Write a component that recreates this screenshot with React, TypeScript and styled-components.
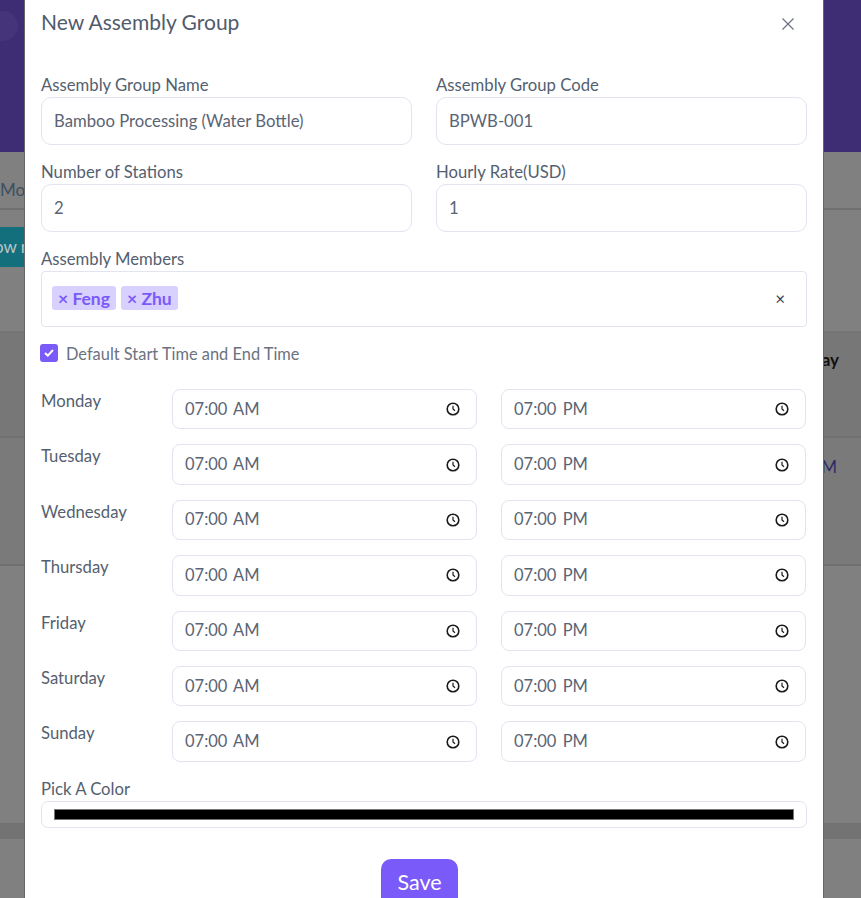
import React from 'react';
import styled, { createGlobalStyle } from 'styled-components';

const GlobalStyle = createGlobalStyle`
  html, body {
    margin: 0;
    padding: 0;
    height: 100%;
    overflow: hidden;
  }
  body {
    font-family: "Lato", "Noto Sans", sans-serif;
    background: #808080;
  }
  * {
    box-sizing: border-box;
  }
`;

const Page = styled.div`
  height: 898px;
  overflow: hidden;
  display: flex;
  flex-direction: column;
`;

const Banner = styled.div`
  height: 152px;
  flex: none;
  position: relative;
  overflow: hidden;
  background: #3e2c75;

  &::before {
    content: '';
    position: absolute;
    top: 11px;
    left: -12px;
    width: 30px;
    height: 30px;
    border-radius: 50%;
    background: rgba(255, 255, 255, 0.04);
  }
`;

const BackdropTabs = styled.div`
  height: 58px;
  flex: none;
  padding-top: 28px;
  line-height: 20px;
  font-size: 17px;
  color: #3c4f60;
  border-bottom: 2px solid #707070;
`;

const BackdropButtonRow = styled.div`
  height: 123px;
  flex: none;
  padding-top: 17px;
  border-bottom: 2px solid #757575;
`;

const BackdropPill = styled.div`
  width: 26px;
  height: 40px;
  overflow: hidden;
  background: #136f7c;
  color: #b9c6c9;
  line-height: 40px;
  white-space: nowrap;
  font-size: 17px;
  text-indent: -6px;
`;

const BackdropRow = styled.div<{ $height: number; $top: number; $right: number; $tone: string; $bold?: boolean; $color: string }>`
  height: ${props => props.$height}px;
  flex: none;
  padding: ${props => props.$top}px ${props => props.$right}px 0 0;
  display: flex;
  justify-content: flex-end;
  background: ${props => props.$tone};
  border-bottom: 2px solid #707070;
  font-size: 17px;
  font-weight: ${props => (props.$bold ? 700 : 400)};
  color: ${props => props.$color};
`;

const BackdropFill = styled.div`
  height: 257px;
  flex: none;
`;

const BackdropBand = styled.div`
  height: 16px;
  flex: none;
  background: #737373;
`;

const Modal = styled.div`
  position: absolute;
  top: 0;
  left: 24px;
  width: 800px;
  height: 898px;
  background: #fff;
  border-left: 1px solid #666;
  border-right: 1px solid #666;
  padding: 0 16px;
  overflow: hidden;
  color: #4a5568;
`;

const Header = styled.div`
  height: 73px;
  display: flex;
  justify-content: space-between;
  align-items: flex-start;
  padding-top: 9px;
`;

const Title = styled.h3`
  margin: 0;
  font-size: 21px;
  font-weight: 400;
  line-height: 26px;
  color: #505b6c;
`;

const CloseButton = styled.button`
  border: 0;
  padding: 0;
  background: none;
  width: 14px;
  height: 14px;
  margin: 8px 12px 0 0;
  display: flex;
  color: #6b7280;
`;

const FieldGrid = styled.div`
  display: grid;
  grid-template-columns: 1fr 1fr;
  column-gap: 24px;
`;

const Field = styled.div`
  display: flex;
  flex-direction: column;
  margin-bottom: 15px;
`;

const Label = styled.label`
  display: block;
  font-size: 16.7px;
  line-height: 24px;
  color: #545f70;
`;

const TextBox = styled.div`
  height: 48px;
  padding: 0 12px 1px 12px;
  display: flex;
  align-items: center;
  border: 1px solid #e2e4f0;
  border-radius: 10px;
  font-size: 16.7px;
  color: #5a6474;
`;

const MemberBox = styled.div`
  height: 56px;
  padding: 0 21px 2px 10px;
  display: flex;
  align-items: center;
  gap: 5px;
  border: 1px solid #e2e4f0;
  border-radius: 4px;
`;

const Tag = styled.span`
  height: 24px;
  padding: 0 6px;
  display: inline-flex;
  align-items: center;
  background: #d8d0fd;
  color: #7a5af8;
  border-radius: 3px;
  font-size: 17.5px;
  font-weight: 700;
  white-space: pre;
`;

const ClearAll = styled.span`
  margin-left: auto;
  font-size: 17px;
  color: #374151;
`;

const CheckRow = styled.div`
  height: 18px;
  margin: 17px 0 0 -1px;
  display: flex;
  align-items: center;
  gap: 8px;
  font-size: 16.4px;
  color: #6b7280;
`;

const CheckBox = styled.span`
  width: 18px;
  height: 18px;
  border-radius: 3px;
  background: #7a5af8;
  display: flex;
  align-items: center;
  justify-content: center;
`;

const Schedule = styled.div`
  margin-top: 27px;
  display: flex;
  flex-direction: column;
  gap: 15px;
`;

const DayRow = styled.div`
  display: grid;
  grid-template-columns: 107px 305px 305px;
  column-gap: 24px;
`;

const DayName = styled.span`
  font-size: 16.7px;
  line-height: 24px;
  color: #545f70;
`;

const TimeBox = styled.div`
  height: 40.4px;
  padding: 0 16px 0 12px;
  display: flex;
  align-items: center;
  justify-content: space-between;
  border: 1px solid #e2e4f0;
  border-radius: 8px;
  font-size: 16.5px;
  color: #5a6474;
  word-spacing: 2px;
`;

const TimeText = styled.span`
  margin-bottom: 1px;
`;

const ColorField = styled.div`
  margin-top: 15px;
`;

const ColorBox = styled.div`
  height: 27px;
  padding: 7px 12px;
  border: 1px solid #e2e4f0;
  border-radius: 7px;
`;

const ColorSwatch = styled.div`
  height: 11px;
  background: #000;
  border: 1px solid #767676;
`;

const Footer = styled.div`
  margin-top: 31px;
  padding-right: 9px;
  display: flex;
  justify-content: center;
`;

const SaveButton = styled.button`
  width: 77px;
  height: 48px;
  padding: 0 0 2px;
  border: 0;
  border-radius: 10px;
  background: #7a5af8;
  color: #fff;
  font-family: inherit;
  font-size: 21.5px;
`;

const ClockIcon = () => (
  <svg width="14" height="14" viewBox="0 0 14 14" fill="none" stroke="#1a1a1a">
    <circle cx="7" cy="7" r="5.8" strokeWidth="1.6" />
    <path d="M7 3.8V7l2 1.8" strokeWidth="1.2" />
  </svg>
);

const days = ['Monday', 'Tuesday', 'Wednesday', 'Thursday', 'Friday', 'Saturday', 'Sunday'];

const App: React.FC = () => (
  <>
    <GlobalStyle />
    <Page>
      <Banner />
      <BackdropTabs>Mod</BackdropTabs>
      <BackdropButtonRow>
        <BackdropPill>ow n</BackdropPill>
      </BackdropButtonRow>
      <BackdropRow $height={105} $top={16} $right={22} $tone="#777777" $bold $color="#111">Monday</BackdropRow>
      <BackdropRow $height={128} $top={18} $right={24} $tone="#7a7a7a" $color="#2f2a66">07:00 AM</BackdropRow>
      <BackdropFill />
      <BackdropBand />
    </Page>
    <Modal>
      <Header>
        <Title>New Assembly Group</Title>
        <CloseButton aria-label="Close">
          <svg width="14" height="14" viewBox="0 0 14 14" stroke="currentColor" strokeWidth="1.2">
            <path d="M1.500 1.500l11 11M12.500 1.500l-11 11" />
          </svg>
        </CloseButton>
      </Header>
      <FieldGrid>
        <Field>
          <Label>Assembly Group Name</Label>
          <TextBox>Bamboo Processing (Water Bottle)</TextBox>
        </Field>
        <Field>
          <Label>Assembly Group Code</Label>
          <TextBox>BPWB-001</TextBox>
        </Field>
        <Field>
          <Label>Number of Stations</Label>
          <TextBox>2</TextBox>
        </Field>
        <Field>
          <Label>Hourly Rate(USD)</Label>
          <TextBox>1</TextBox>
        </Field>
      </FieldGrid>
      <Label>Assembly Members</Label>
      <MemberBox>
        <Tag>× Feng</Tag>
        <Tag>× Zhu</Tag>
        <ClearAll>×</ClearAll>
      </MemberBox>
      <CheckRow>
        <CheckBox>
          <svg width="10" height="8" viewBox="0 0 10 8" fill="none" stroke="#fff" strokeWidth="2">
            <path d="M1 4l2.800 2.600L9 1" />
          </svg>
        </CheckBox>
        Default Start Time and End Time
      </CheckRow>
      <Schedule>
        {days.map(day => (
          <DayRow key={day}>
            <DayName>{day}</DayName>
            <TimeBox><TimeText>07:00 AM</TimeText><ClockIcon /></TimeBox>
            <TimeBox><TimeText>07:00 PM</TimeText><ClockIcon /></TimeBox>
          </DayRow>
        ))}
      </Schedule>
      <ColorField>
        <Label>Pick A Color</Label>
        <ColorBox>
          <ColorSwatch />
        </ColorBox>
      </ColorField>
      <Footer>
        <SaveButton>Save</SaveButton>
      </Footer>
    </Modal>
  </>
);

export default App;
